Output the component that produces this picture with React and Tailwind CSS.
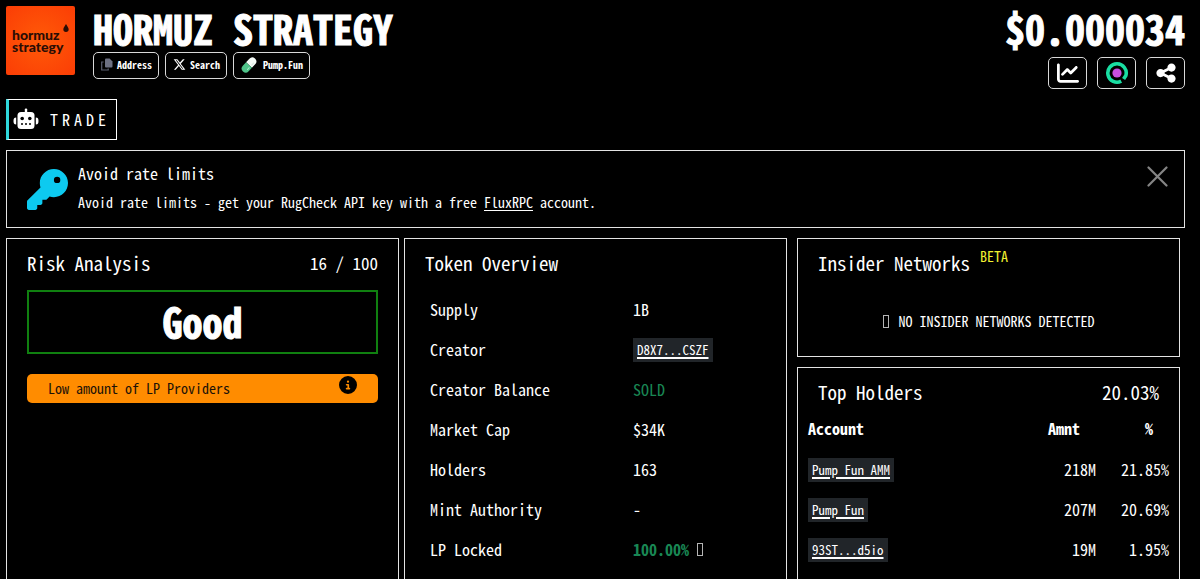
import React from "react";
import { FaKey, FaChartLine, FaShareNodes, FaCircleInfo, FaXTwitter } from "react-icons/fa6";

function CopyIcon() {
  return (
    <svg width="12" height="14" viewBox="0 0 12 14" aria-hidden="true">
      <path d="M2.6 4H0.7V12H7.2V10.4" fill="none" stroke="#5b5f70" strokeWidth="1.2" />
      <path d="M5 0.5H8.6L11.5 3.4V8.4A1 1 0 0 1 10.5 9.4H5A1 1 0 0 1 4 8.4V1.5A1 1 0 0 1 5 0.5Z" fill="#6d7183" />
    </svg>
  );
}

function PillIcon() {
  return (
    <svg width="16" height="16" viewBox="0 0 16 16" aria-hidden="true">
      <g transform="rotate(43 8 8)">
        <path d="M4 8V3.2A4 4 0 0 1 12 3.2V8Z" fill="#f4fbf7" />
        <path d="M4 8H12V12.8A4 4 0 0 1 4 12.8Z" fill="#4fc48a" />
        <path d="M10 3.4V6.2" stroke="#d5e6dd" strokeWidth="1" strokeLinecap="round" />
        <path d="M10 9.8V12.4" stroke="#a6e8c8" strokeWidth="1" strokeLinecap="round" />
      </g>
    </svg>
  );
}

function RobotIcon() {
  return (
    <svg width="26" height="22" viewBox="0 0 26 22" aria-hidden="true">
      <rect x="11.8" y="0.5" width="2.4" height="5" rx="1" fill="#fff" />
      <rect x="4.5" y="4" width="17" height="17" rx="3.5" fill="#fff" />
      <path d="M3.2 9.5V16.5C1.2 16.5 0.5 15.4 0.5 13S1.2 9.5 3.2 9.5Z" fill="#fff" />
      <path d="M22.8 9.5V16.5C24.8 16.5 25.5 15.4 25.5 13S24.8 9.5 22.8 9.5Z" fill="#fff" />
      <circle cx="9.2" cy="10.5" r="1.8" fill="#000" />
      <circle cx="16.8" cy="10.5" r="1.8" fill="#000" />
      <path d="M8 16H10M12 16H14M16 16H18" stroke="#000" strokeWidth="1.6" />
    </svg>
  );
}

function RingIcon() {
  return (
    <svg width="24" height="24" viewBox="0 0 24 24" aria-hidden="true">
      <path d="M16.2 20.2A9.2 9.2 0 1 1 20.9 14.4L18.6 18" fill="none" stroke="#19dea2" strokeWidth="3.6" />
      <circle cx="12" cy="12" r="4.6" fill="#c84fe0" />
    </svg>
  );
}

function MissingGlyph() {
  return <span aria-hidden="true" className="inline-block h-[13px] w-[6px] border border-[#b5b5b5]" />;
}

function Logo() {
  return (
    <div className="relative flex size-[69px] shrink-0 flex-col justify-center rounded-[2px] bg-[radial-gradient(circle,#ff5a08,#fb3d05)] pl-[6px] font-[Lato,sans-serif] text-[14px] font-black leading-[12px] text-[#2b0d05]">
      <p>
        hormuz
        <br />
        strategy
      </p>
      <svg className="absolute left-[57px] top-[18px]" width="6" height="8" viewBox="0 0 6 9" aria-hidden="true">
        <path d="M3 0C4 2 6 4 6 6A3 3 0 0 1 0 6C0 4 2 2 3 0Z" fill="#2b0d05" />
      </svg>
    </div>
  );
}

const chip = "flex h-[27px] items-center rounded-[5px] border border-[#d8d8d8] pb-[2px] pl-[7px] pr-[6px] text-[10px] font-bold";
const iconButton = "flex h-8 w-[39px] items-center justify-center rounded-[5px] border border-[#d8d8d8]";
const display = "text-[40px] font-bold [-webkit-text-stroke:1px_white]";

function Address({ children }) {
  return (
    <a href="#" className="inline-block bg-[#212529] px-1 text-[13px] leading-6 underline decoration-2 underline-offset-2">
      {children}
    </a>
  );
}

const overview = [
  ["Supply", "1B"],
  ["Creator", <Address>D8X7...CSZF</Address>],
  ["Creator Balance", <span className="text-[#198754]">SOLD</span>],
  ["Market Cap", "$34K"],
  ["Holders", "163"],
  ["Mint Authority", "-"],
  ["LP Locked", <><span className="font-bold text-[#198754]">100.00%</span> <MissingGlyph /></>],
];

const holders = [
  ["Pump Fun AMM", "218M", "21.85%"],
  ["Pump Fun", "207M", "20.69%"],
  ["93ST...d5io", "19M", "1.95%"],
];

export default function App() {
  return (
    <div className="flex min-h-screen flex-col bg-black pl-[6px] pr-[15px] pt-[6px] font-['Noto_Sans_Mono_CJK_SC','Noto_Sans_Mono_CJK_JP','Liberation_Mono',monospace] text-[16px] leading-6 text-white">
      <header className="flex items-start justify-between">
        <div className="flex gap-[18px]">
          <Logo />
          <div>
            <h1 className={`${display} leading-[44px]`}>HORMUZ STRATEGY</h1>
            <div className="flex gap-[6px] pt-[2px]">
              <button className={`${chip} gap-1`}><CopyIcon />Address</button>
              <a href="#" className={`${chip} gap-1`}><FaXTwitter size={13} />Search</a>
              <a href="#" className={`${chip} gap-[6px]`}><PillIcon />Pump.Fun</a>
            </div>
          </div>
        </div>
        <div className="flex flex-col items-end">
          <p className={`${display} leading-[44px]`}>$0.000034</p>
          <div className="flex gap-[10px] pt-[7px]">
            <button aria-label="Chart" className={iconButton}><FaChartLine size={22} /></button>
            <button aria-label="Scan" className={iconButton}><RingIcon /></button>
            <button aria-label="Share" className={iconButton}><FaShareNodes size={22} /></button>
          </div>
        </div>
      </header>

      <div className="pt-[10px]">
        <button className="flex h-[41px] items-center gap-[11px] border border-l-[3px] border-white border-l-[#2fd8dc] pb-[2px] pl-1 pr-[6px]">
          <RobotIcon />
          <span className="tracking-[4px]">TRADE</span>
        </button>
      </div>

      <section className="mt-[10px] flex h-[78px] items-start gap-[10px] border border-[#e4e4e4] pl-5 pr-4">
        <FaKey size={41} className="mt-[18px] shrink-0 text-[#0dcaf0]" />
        <div className="grow pt-[10px]">
          <h2>Avoid rate limits</h2>
          <p className="pt-[5px] text-[14px]">
            Avoid rate limits - get your RugCheck API key with a free <a href="#" className="underline underline-offset-2">FluxRPC</a> account.
          </p>
        </div>
        <button aria-label="Close" className="mt-[15px]">
          <svg width="21" height="21" viewBox="0 0 21 21" aria-hidden="true">
            <path d="M1.5 1.5L19.5 19.5M19.5 1.5L1.5 19.5" stroke="#858585" strokeWidth="2.2" strokeLinecap="round" />
          </svg>
        </button>
      </section>

      <main className="mt-[10px] grid grow grid-cols-3">
        <section className="border border-b-0 border-[#e4e4e4] px-5 pt-3">
          <div className="flex items-center justify-between">
            <h2 className="text-[19px]">Risk Analysis</h2>
            <span className="text-[17px]">16 / 100</span>
          </div>
          <p className={`${display} mt-[15px] border-2 border-[#108010] pb-[2px] text-center leading-[58px]`}>Good</p>
          <div className="mt-5 flex items-start justify-between rounded-[5px] bg-[#ff8c00] px-[21px] text-[14px] leading-[29px] text-[#1c1208]">
            <span>Low amount of LP Providers</span>
            <FaCircleInfo size={18} className="mt-[2px] text-black" />
          </div>
        </section>

        <div className="flex px-[5px]">
          <section className="grow border border-b-0 border-[#e4e4e4] px-5 pt-3">
            <h2 className="text-[19px]">Token Overview</h2>
            <table className="mt-[14px] w-full">
              <tbody>
                {overview.map(([label, value]) => (
                  <tr key={label} className="h-10">
                    <th scope="row" className="w-[61%] p-0 pl-[5px] text-left font-normal">{label}</th>
                    <td className="p-0">{value}</td>
                  </tr>
                ))}
              </tbody>
            </table>
          </section>
        </div>

        <div className="flex flex-col gap-[10px] px-[5px]">
          <section className="h-[119px] border border-[#e4e4e4] px-5 pt-3">
            <h2 className="flex gap-[10px] text-[19px]">
              Insider Networks <span className="text-[14px] leading-[10px] text-[#f2f230]">BETA</span>
            </h2>
            <p className="flex items-center justify-center gap-[10px] pt-[34px] text-[14px]">
              <MissingGlyph />NO INSIDER NETWORKS DETECTED
            </p>
          </section>
          <section className="grow border border-b-0 border-[#e4e4e4] px-[10px] pt-3">
            <div className="flex justify-between px-[10px] text-[19px]">
              <h2>Top Holders</h2>
              <span>20.03%</span>
            </div>
            <table className="mt-[2px] w-full">
              <thead>
                <tr className="h-[43px] align-middle">
                  <th className="p-0 text-left">Account</th>
                  <th className="w-[100px] p-0 pr-4 text-right">Amnt</th>
                  <th className="w-[73px] p-0 pr-4 text-right">%</th>
                </tr>
              </thead>
              <tbody>
                {holders.map(([name, amount, share]) => (
                  <tr key={name} className="h-10">
                    <td className="p-0"><Address>{name}</Address></td>
                    <td className="p-0 text-right">{amount}</td>
                    <td className="p-0 text-right">{share}</td>
                  </tr>
                ))}
              </tbody>
            </table>
          </section>
        </div>
      </main>
    </div>
  );
}
